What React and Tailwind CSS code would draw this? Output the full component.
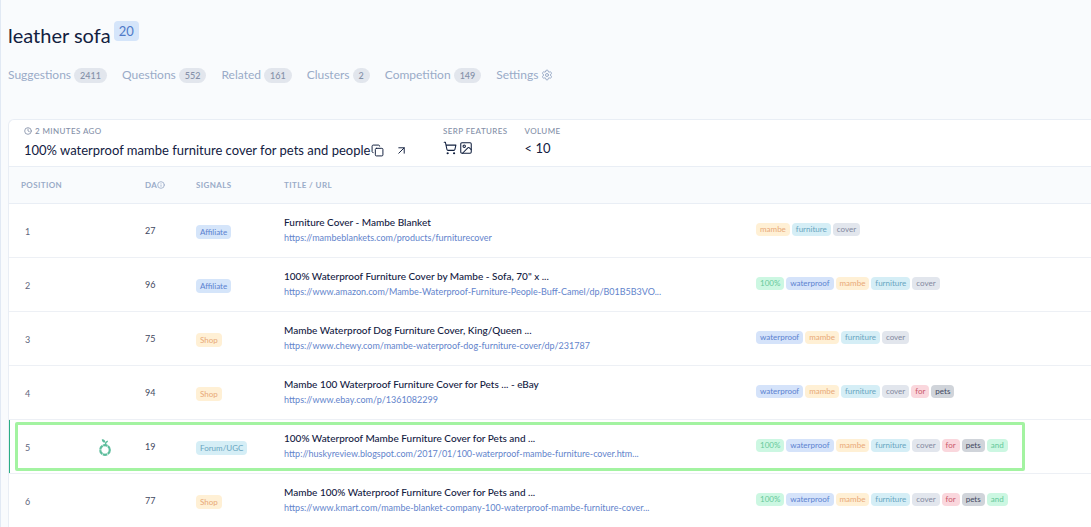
import React from 'react';
import { Clock, Copy, ArrowUpRight, ShoppingCart, Image, Info, Settings } from 'lucide-react';

const tabs = [
  { name: 'Suggestions', count: 2411 },
  { name: 'Questions', count: 552 },
  { name: 'Related', count: 161 },
  { name: 'Clusters', count: 2 },
  { name: 'Competition', count: 149 },
];

const signalColors = {
  Affiliate: 'bg-[#d5e5fa] text-[#5b82d0]',
  Shop: 'bg-[#fff0d5] text-[#e8a878]',
  'Forum/UGC': 'bg-[#d5eef6] text-[#68a5c0]',
};

const wordColors = {
  '100%': 'bg-[#ccf7e2] text-[#66c99a]',
  waterproof: 'bg-[#d5e3fa] text-[#5b82d0]',
  mambe: 'bg-[#fff0d5] text-[#e8a878]',
  furniture: 'bg-[#d5eef6] text-[#68a5c0]',
  cover: 'bg-[#e2e6ed] text-[#83899f]',
  for: 'bg-[#fad7dd] text-[#c9586b]',
  pets: 'bg-[#d0d4da] text-[#3f4860]',
  and: 'bg-[#ccf7e2] text-[#66c99a]',
};

const results = [
  {
    position: 1,
    da: 27,
    signal: 'Affiliate',
    title: 'Furniture Cover - Mambe Blanket',
    url: 'https://mambeblankets.com/products/furniturecover',
    words: ['mambe', 'furniture', 'cover'],
  },
  {
    position: 2,
    da: 96,
    signal: 'Affiliate',
    title: '100% Waterproof Furniture Cover by Mambe - Sofa, 70" x ...',
    url: 'https://www.amazon.com/Mambe-Waterproof-Furniture-People-Buff-Camel/dp/B01B5B3VO...',
    words: ['100%', 'waterproof', 'mambe', 'furniture', 'cover'],
  },
  {
    position: 3,
    da: 75,
    signal: 'Shop',
    title: 'Mambe Waterproof Dog Furniture Cover, King/Queen ...',
    url: 'https://www.chewy.com/mambe-waterproof-dog-furniture-cover/dp/231787',
    words: ['waterproof', 'mambe', 'furniture', 'cover'],
  },
  {
    position: 4,
    da: 94,
    signal: 'Shop',
    title: 'Mambe 100 Waterproof Furniture Cover for Pets ... - eBay',
    url: 'https://www.ebay.com/p/1361082299',
    words: ['waterproof', 'mambe', 'furniture', 'cover', 'for', 'pets'],
  },
  {
    position: 5,
    da: 19,
    signal: 'Forum/UGC',
    title: '100% Waterproof Mambe Furniture Cover for Pets and ...',
    url: 'http://huskyreview.blogspot.com/2017/01/100-waterproof-mambe-furniture-cover.htm...',
    words: ['100%', 'waterproof', 'mambe', 'furniture', 'cover', 'for', 'pets', 'and'],
    weakSpot: true,
  },
  {
    position: 6,
    da: 77,
    signal: 'Shop',
    title: 'Mambe 100% Waterproof Furniture Cover for Pets and ...',
    url: 'https://www.kmart.com/mambe-blanket-company-100-waterproof-mambe-furniture-cover...',
    words: ['100%', 'waterproof', 'mambe', 'furniture', 'cover', 'for', 'pets', 'and'],
  },
];

const FruitIcon = () => (
  <svg width="14" height="20" viewBox="0 0 14 20" fill="none" role="img" aria-label="Low hanging fruit">
    <circle cx="7" cy="13" r="4.8" stroke="#5dbd9c" strokeWidth="2.2" strokeDasharray="4.5 0.53" />
    <path d="M7.4 8C7.3 6.2 8 4.8 9.8 4.2" stroke="#5dbd9c" strokeWidth="1.3" />
    <path d="M3.8 2.2c2.2-.4 3.7.9 3.5 3.4-2.2.2-3.5-1.1-3.5-3.4z" fill="#5dbd9c" />
  </svg>
);

const ResultRow = ({ result }) => (
  <tr className="relative h-[54px] border-b border-[#edf0f5]">
    <td className="pt-0.5 pl-4 text-[9px] text-[#5f677d]">
      {result.position}
      {result.weakSpot && (
        <>
          <span className="absolute inset-y-0 left-0 w-px bg-[#2bae84]" />
          <span className="pointer-events-none absolute top-0.5 right-[66px] bottom-0.5 left-1.5 rounded-xs border-3 border-[#a3f3a1]" />
        </>
      )}
    </td>
    <td className="pl-3">{result.weakSpot && <FruitIcon />}</td>
    <td className="pl-3 text-[9px] text-[#3f4860]">{result.da}</td>
    <td className="pt-0.5 pl-3">
      <span className={`block w-fit rounded px-1 text-[8px] leading-[14px] ${signalColors[result.signal]}`}>
        {result.signal}
      </span>
    </td>
    <td className="pb-0.5 pl-3">
      <p className="text-[10px] leading-[17px] font-medium text-[#12203f]">{result.title}</p>
      <a href={result.url} className="block text-[9px] leading-[14px] text-[#6384cc]">
        {result.url}
      </a>
    </td>
    <td className="pb-0.5 pl-3">
      <div className="flex gap-0.5">
        {result.words.map((word) => (
          <span key={word} className={`rounded px-1 text-[8px] leading-[13px] ${wordColors[word]}`}>
            {word}
          </span>
        ))}
      </div>
    </td>
  </tr>
);

const App = () => {
  return (
    <div className="min-h-screen overflow-x-hidden border-l border-[#e1e9f4] bg-[#f9fbfd] pt-5 pl-[7px] font-['Lato','Liberation_Sans',sans-serif] text-[#12203f]">
      <header className="flex items-start gap-[3px]">
        <h1 className="text-[20px] leading-[30px]">leather sofa</h1>
        <span className="mt-px rounded bg-[#d5e5fa] px-[5px] text-[13px] leading-5 text-[#4f7ac8]">20</span>
      </header>

      <nav className="mt-[17px] flex h-4 items-center gap-[15px] text-[12px] text-[#9aabc8]">
        {tabs.map((tab) => (
          <a key={tab.name} href="#" className="flex items-center gap-[3px]">
            {tab.name}
            <span className="rounded-full bg-[#e2e6ed] px-1.5 text-[9px] leading-[15px] font-medium text-[#8490a8]">
              {tab.count}
            </span>
          </a>
        ))}
        <a href="#" className="flex items-center gap-[3px]">
          Settings
          <Settings size={12} strokeWidth={2} />
        </a>
      </nav>

      <section className="mt-9 overflow-hidden rounded-tl-md border-t border-l border-[#e9eef5] bg-white">
        <div className="flex h-[46px] gap-[17px] pt-1 pl-[15px]">
          <div className="w-[402px]">
            <p className="flex items-center gap-[3px] text-[8px] leading-[14px] font-medium tracking-wider text-[#8490a8]">
              <Clock size={8} strokeWidth={2.5} />2 MINUTES AGO
            </p>
            <div className="flex items-center gap-px text-[13px] leading-6">
              <h2>100% waterproof mambe furniture cover for pets and people</h2>
              <button type="button" aria-label="Copy keyword">
                <Copy size={13} strokeWidth={1.8} />
              </button>
              <a href="#" aria-label="Open keyword" className="ml-2.5">
                <ArrowUpRight size={13} strokeWidth={1.8} />
              </a>
            </div>
          </div>
          <div>
            <p className="text-[8px] leading-[14px] font-medium tracking-wider text-[#8490a8]">SERP FEATURES</p>
            <div className="mt-[3px] flex items-center gap-0.5">
              <ShoppingCart size={14} strokeWidth={1.8} />
              <Image size={14} strokeWidth={1.8} />
            </div>
          </div>
          <div>
            <p className="text-[8px] leading-[14px] font-medium tracking-wider text-[#8490a8]">VOLUME</p>
            <p className="text-[13px] leading-5">&lt; 10</p>
          </div>
        </div>

        <table className="w-full table-fixed border-collapse text-left">
          <colgroup>
            <col className="w-[77px]" />
            <col className="w-[47px]" />
            <col className="w-[51px]" />
            <col className="w-[88px]" />
            <col className="w-[472px]" />
            <col />
          </colgroup>
          <thead className="border-y border-[#e9eef5] bg-[#f9fbfd] text-[8px] tracking-wider text-[#9aabc8]">
            <tr className="h-[37px]">
              <th className="pl-3 font-bold">POSITION</th>
              <td />
              <th className="pl-3 font-bold">
                <span className="flex items-center">
                  DA
                  <Info size={8} strokeWidth={2.5} />
                </span>
              </th>
              <th className="pl-3 font-bold">SIGNALS</th>
              <th className="pl-3 font-bold">TITLE / URL</th>
              <td />
            </tr>
          </thead>
          <tbody>
            {results.map((result) => (
              <ResultRow key={result.position} result={result} />
            ))}
          </tbody>
        </table>
      </section>
    </div>
  );
};

export default App;
